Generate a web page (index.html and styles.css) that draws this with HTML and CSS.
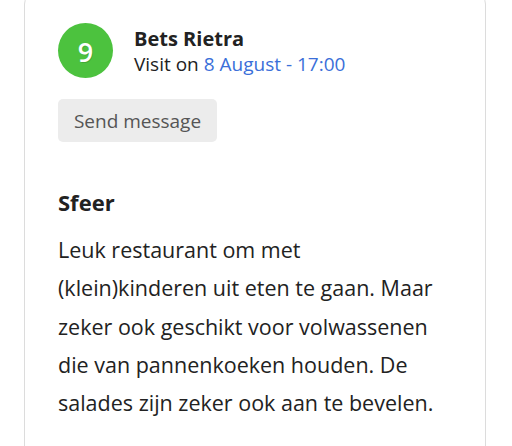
FILE: index.html
```html
<!DOCTYPE html>
<html>
<head>
<meta charset="utf-8">
<link rel="stylesheet" href="styles.css">
</head>
<body>
<div class="card">
  <div class="header">
    <div class="score">9</div>
    <div class="who">
      <div class="name">Bets Rietra</div>
      <div class="visit">Visit on <span class="date">8 August - 17:00</span></div>
    </div>
  </div>
  <button class="send">Send message</button>
  <h3 class="title">Sfeer</h3>
  <p class="text">Leuk restaurant om met (klein)kinderen uit eten te gaan. Maar zeker ook geschikt voor volwassenen die van pannenkoeken houden. De salades zijn zeker ook aan te bevelen.</p>
</div>
</body>
</html>
```

FILE: styles.css
```css
html, body {
  margin: 0;
  padding: 0;
  background: #fff;
  font-family: "Open Sans", sans-serif;
  color: #222;
  overflow: hidden;
}
.card {
  margin: -6px 0 0 24px;
  width: 462px;
  height: 480px;
  border: 1px solid #dcdcdc;
  border-radius: 10px;
  padding: 28px 33px 0 33px;
  box-sizing: border-box;
}
.header {
  display: flex;
  align-items: center;
  gap: 21px;
}
.score {
  width: 55px;
  height: 55px;
  border-radius: 50%;
  background: #4cc23e;
  color: #fff;
  font-size: 27px;
  font-weight: 600;
  line-height: 1;
  padding-top: 2px;
  box-sizing: border-box;
  display: flex;
  align-items: center;
  justify-content: center;
  text-shadow: 1px 1px 0 rgba(0, 0, 0, 0.12);
  flex: none;
}
.who {
  margin-top: 1px;
}
.name {
  font-size: 20px;
  font-weight: 700;
  line-height: 25px;
  color: #222;
}
.visit {
  margin-top: 1px;
  font-size: 19px;
  line-height: 25px;
  color: #222;
}
.date {
  color: #3b6fd9;
}
.send {
  display: block;
  margin-top: 21px;
  width: 159px;
  height: 43px;
  border: none;
  border-radius: 5px;
  background: #ececec;
  color: #555;
  font-family: "Open Sans", sans-serif;
  font-size: 19px;
  padding: 0;
}
.title {
  margin: 46px 0 0;
  font-size: 22px;
  font-weight: 700;
  line-height: 28px;
  color: #222;
}
.text {
  margin: 15px 0 0;
  font-size: 21.5px;
  line-height: 38.3px;
  color: #222;
}
```
